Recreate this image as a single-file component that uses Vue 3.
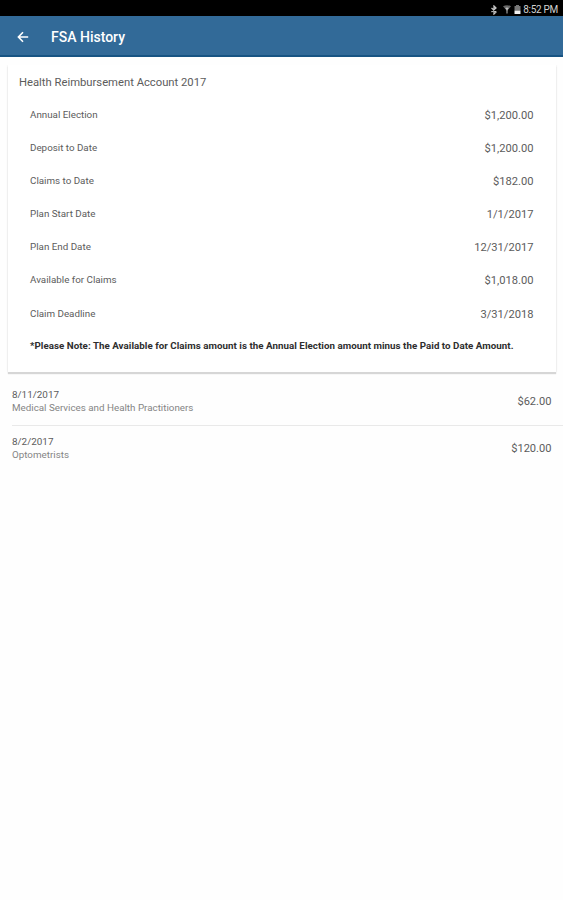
<template>
  <div class="screen">
    <div class="status-bar">
      <svg class="bluetooth" viewBox="0 0 8 10">
        <path d="M1.5 3 L6 7 L4 9 V1 L6 3 L1.5 7" fill="none" stroke="#c4c4c4" stroke-width="1.3" />
      </svg>
      <svg class="wifi" viewBox="0 0 8 9">
        <path d="M0 1.2 Q4 -0.8 8 1.2 L4 6 Z" fill="#686868" />
        <path d="M2.2 3 Q4 2 5.8 3 L4.5 4.8 V8.5 H3.5 V4.8 Z" fill="#bdbdbd" />
      </svg>
      <svg class="battery" viewBox="0 0 7 9">
        <path d="M2 0 H5 V1 H6.5 V5.5 H0.5 V1 H2 Z" fill="#777" />
        <path d="M0.5 5.5 H6.5 V9 H0.5 Z" fill="#f2f2f2" />
      </svg>
      <span class="clock">8:52 PM</span>
    </div>

    <header class="toolbar">
      <svg class="back-icon" viewBox="0 0 12 12">
        <path d="M11.2 6 H1.6 M6 1.2 L1.4 6 L6 10.8" fill="none" stroke="#fff" stroke-width="1.6" />
      </svg>
      <h1 class="toolbar-title">FSA History</h1>
    </header>

    <section class="card">
      <h2 class="card-title">Health Reimbursement Account 2017</h2>
      <div v-for="row in rows" :key="row.label" class="row">
        <span class="row-label">{{ row.label }}</span>
        <span class="row-value">{{ row.value }}</span>
      </div>
      <p class="note">
        *Please Note: The Available for Claims amount is the Annual Election amount minus the Paid to Date Amount.
      </p>
    </section>

    <ul class="claims">
      <li v-for="claim in claims" :key="claim.date" class="claim">
        <div class="claim-info">
          <span class="claim-date">{{ claim.date }}</span>
          <span class="claim-type">{{ claim.type }}</span>
        </div>
        <span class="claim-amount">{{ claim.amount }}</span>
      </li>
    </ul>
  </div>
</template>

<script setup>
const rows = [
  { label: 'Annual Election', value: '$1,200.00' },
  { label: 'Deposit to Date', value: '$1,200.00' },
  { label: 'Claims to Date', value: '$182.00' },
  { label: 'Plan Start Date', value: '1/1/2017' },
  { label: 'Plan End Date', value: '12/31/2017' },
  { label: 'Available for Claims', value: '$1,018.00' },
  { label: 'Claim Deadline', value: '3/31/2018' }
]

const claims = [
  { date: '8/11/2017', type: 'Medical Services and Health Practitioners', amount: '$62.00' },
  { date: '8/2/2017', type: 'Optometrists', amount: '$120.00' }
]
</script>

<style>
body {
  margin: 0;
  background: #fefefe;
}
</style>

<style scoped>
.screen {
  min-height: 900px;
  background: #fefefe;
  font-family: Roboto, "Liberation Sans", sans-serif;
  color: #5c5c5c;
}

.status-bar {
  display: flex;
  align-items: center;
  justify-content: flex-end;
  box-sizing: border-box;
  height: 16px;
  padding: 3px 5px 0 0;
  background: #000;
}

.bluetooth {
  width: 8px;
  height: 10px;
  margin-right: 5px;
}

.wifi {
  width: 8px;
  height: 9px;
  margin-right: 3px;
}

.battery {
  width: 7px;
  height: 9px;
  margin-right: 2px;
}

.clock {
  font-size: 10px;
  line-height: 13px;
  letter-spacing: -0.3px;
  color: #d2d2d2;
}

.toolbar {
  display: flex;
  align-items: center;
  box-sizing: border-box;
  height: 41px;
  padding: 3px 17px 0;
  background: #326a98;
  border-bottom: 2px solid #175483;
}

.back-icon {
  width: 12px;
  height: 12px;
  margin-right: 22px;
}

.toolbar-title {
  margin: 0;
  font-size: 14px;
  line-height: 20px;
  font-weight: 500;
  color: #fff;
}

.card {
  box-sizing: border-box;
  height: 307px;
  margin: 8px 7px 0 8px;
  padding: 8px 22px 0;
  background: #fff;
  box-shadow: 0 2px 1px #d6d6d6, 0 0 2px #e4e4e4;
  clip-path: inset(0 -3px -4px -3px);
}

.card-title {
  margin: 0 0 14px -11px;
  font-size: 11.25px;
  line-height: 20px;
  font-weight: 400;
}

.row {
  display: flex;
  align-items: center;
  justify-content: space-between;
  height: 16px;
  margin-bottom: 17.1px;
}

.row-label {
  padding-bottom: 1px;
  font-size: 9.8px;
}

.row-value {
  padding-top: 1px;
  margin-right: 0.5px;
  font-size: 11.15px;
}

.note {
  margin: 0;
  font-size: 9.75px;
  line-height: 14px;
  font-weight: 700;
  letter-spacing: 0.04px;
  white-space: nowrap;
  color: #2e2e2e;
}

.claims {
  margin: 6px 0 0 12px;
  padding: 0;
  list-style: none;
}

.claim {
  display: flex;
  align-items: center;
  justify-content: space-between;
  box-sizing: border-box;
  height: 47px;
  padding-right: 11.5px;
}

.claim + .claim {
  height: 46px;
  border-top: 1px solid #e9e9e9;
}

.claim-info {
  display: flex;
  flex-direction: column;
  padding-bottom: 2px;
}

.claim-date {
  font-size: 9.9px;
  line-height: 13px;
}

.claim-type {
  font-size: 9.8px;
  line-height: 13px;
  color: #858585;
}

.claim-amount {
  font-size: 11.1px;
}
</style>
